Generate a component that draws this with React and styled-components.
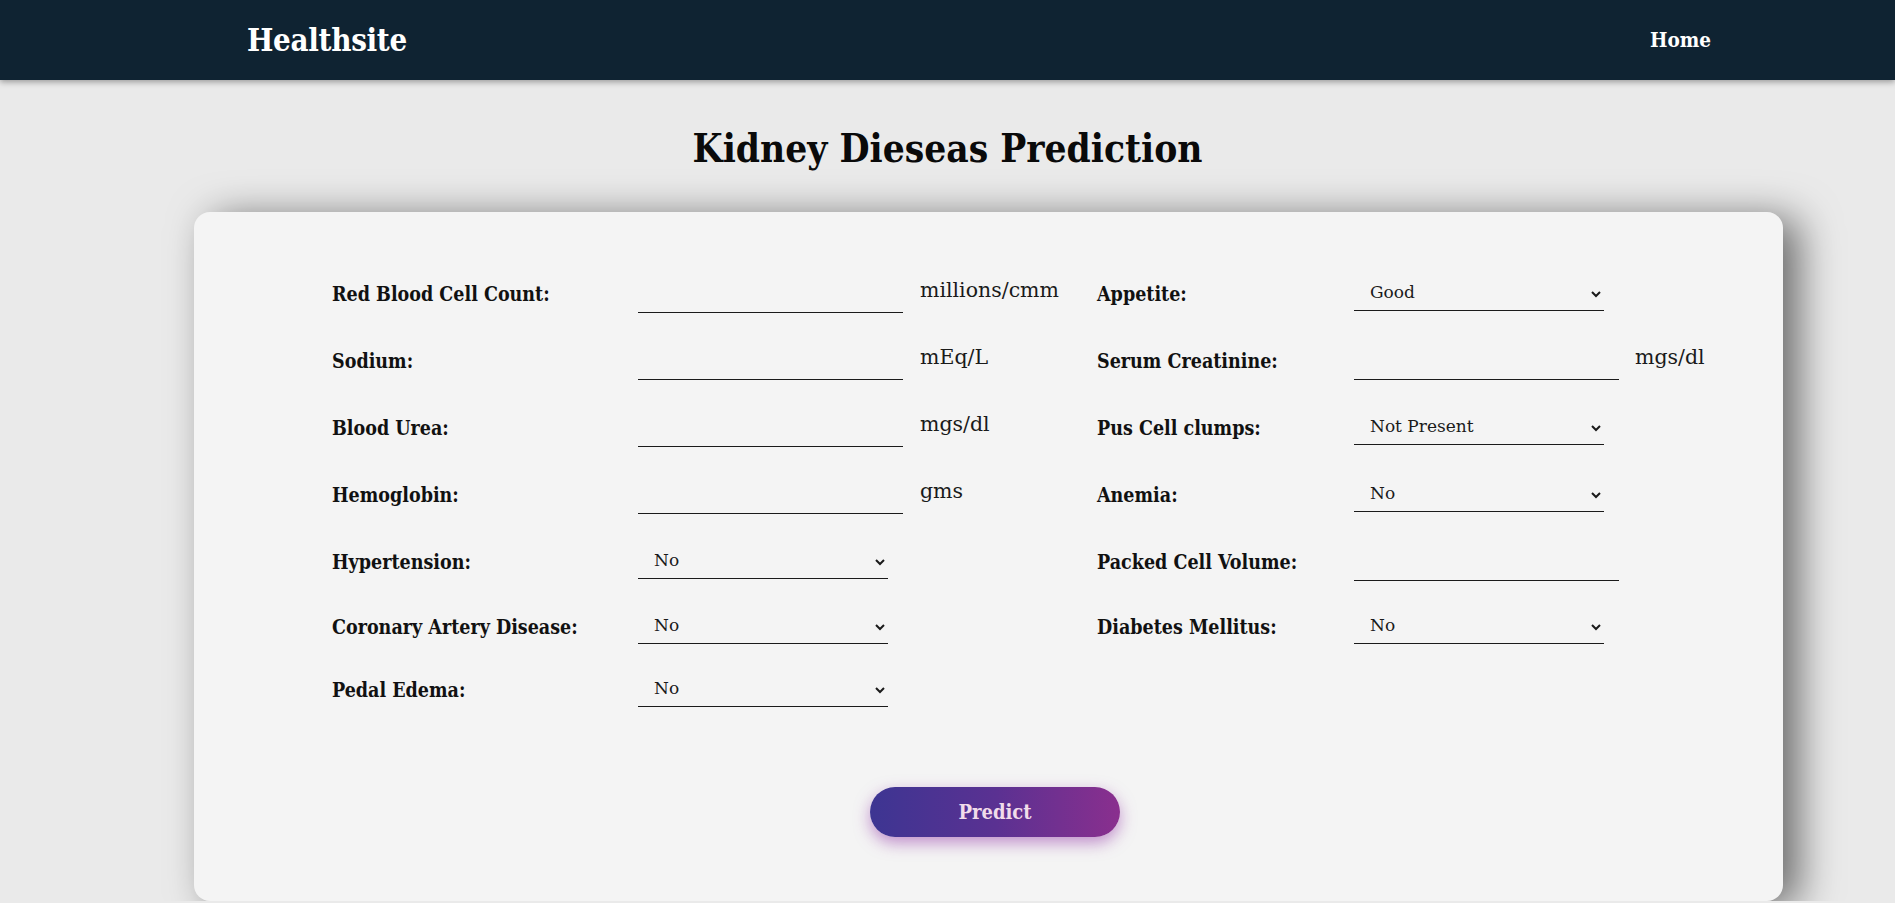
import styled, { createGlobalStyle } from "styled-components";

const GlobalStyle = createGlobalStyle`
  body {
    margin: 0;
    background: #eaeaea;
    font-family: "DejaVu Serif", serif;
    font-stretch: condensed;
    color: #111;
  }
`;

const leftRows = [
  { label: "Red Blood Cell Count:", type: "input", unit: "millions/cmm" },
  { label: "Sodium:", type: "input", unit: "mEq/L" },
  { label: "Blood Urea:", type: "input", unit: "mgs/dl" },
  { label: "Hemoglobin:", type: "input", unit: "gms" },
  { label: "Hypertension:", type: "select", options: ["No", "Yes"] },
  { label: "Coronary Artery Disease:", type: "select", options: ["No", "Yes"] },
  { label: "Pedal Edema:", type: "select", options: ["No", "Yes"] },
];

const rightRows = [
  { label: "Appetite:", type: "select", options: ["Good", "Poor"] },
  { label: "Serum Creatinine:", type: "input", unit: "mgs/dl" },
  { label: "Pus Cell clumps:", type: "select", options: ["Not Present", "Present"] },
  { label: "Anemia:", type: "select", options: ["No", "Yes"] },
  { label: "Packed Cell Volume:", type: "input" },
  { label: "Diabetes Mellitus:", type: "select", options: ["No", "Yes"] },
  null,
];

const renderField = (field, prefix) => {
  if (!field) {
    return [<span key={`${prefix}a`} />, <span key={`${prefix}b`} />, <span key={`${prefix}c`} />];
  }

  return [
    <Label key={`${prefix}label`}>{field.label}</Label>,
    <FieldCell key={`${prefix}field`}>
      {field.type === "input" ? (
        <TextInput type="text" />
      ) : (
        <Select defaultValue={field.options[0]}>
          {field.options.map((opt) => (
            <option key={opt}>{opt}</option>
          ))}
        </Select>
      )}
    </FieldCell>,
    <Unit key={`${prefix}unit`}>{field.unit || ""}</Unit>,
  ];
};

const App = () => {
  return (
    <>
      <GlobalStyle />
      <Navbar>
        <Brand>Healthsite</Brand>
        <NavLink href="#">Home</NavLink>
      </Navbar>

      <TitleArea>
        <Title>Kidney Dieseas Prediction</Title>
      </TitleArea>

      <Card>
        <FormGrid>
          {leftRows.map((row, i) => [
            ...renderField(row, `l${i}`),
            ...renderField(rightRows[i], `r${i}`),
          ])}
        </FormGrid>

        <ButtonRow>
          <PredictButton type="button">Predict</PredictButton>
        </ButtonRow>
      </Card>
    </>
  );
};

const Navbar = styled.nav`
  height: 80px;
  background: #0f2332;
  display: flex;
  align-items: center;
  justify-content: space-between;
  padding: 0 184px 0 247px;
  box-shadow: 0 2px 6px rgba(0, 0, 0, 0.35);
  position: relative;
`;

const Brand = styled.div`
  color: #fff;
  font-weight: 700;
  font-size: 31px;
  letter-spacing: -0.3px;
`;

const NavLink = styled.a`
  color: #fff;
  font-weight: 700;
  font-size: 20.5px;
  text-decoration: none;
`;

const TitleArea = styled.div`
  height: 132px;
  display: flex;
  align-items: center;
  justify-content: center;
  padding-top: 4px;
  box-sizing: border-box;
`;

const Title = styled.h1`
  margin: 0;
  font-size: 38.5px;
  font-weight: 700;
  color: #0a0a0a;
`;

const Card = styled.div`
  margin: 0 112px 0 194px;
  background: #f4f4f4;
  border-radius: 16px;
  box-shadow: 16px 6px 40px rgba(0, 0, 0, 0.55);
  padding: 64px 0 64px 138px;
`;

const FormGrid = styled.div`
  display: grid;
  grid-template-columns: 306px 282px 177px 257px 281px auto;
  align-items: center;
  row-gap: 30px;
`;

const Label = styled.label`
  font-weight: 700;
  font-size: 19.5px;
  color: #111;
`;

const FieldCell = styled.div`
  display: flex;
`;

const TextInput = styled.input`
  width: 265px;
  height: 37px;
  box-sizing: border-box;
  border: none;
  border-bottom: 1px solid #1a1a1a;
  background: transparent;
  outline: none;
  font-family: inherit;
  font-size: 18px;
`;

const Select = styled.select`
  width: 250px;
  height: 33px;
  box-sizing: border-box;
  border: none;
  border-bottom: 1px solid #1a1a1a;
  border-radius: 0;
  background: transparent;
  padding: 0 0 5px 12px;
  font-family: "DejaVu Serif", serif;
  font-stretch: normal;
  font-size: 17px;
  color: #1a1a1a;
  outline: none;
`;

const Unit = styled.span`
  font-size: 20.5px;
  font-stretch: normal;
  color: #1a1a1a;
  align-self: start;
  padding-top: 2px;
`;

const ButtonRow = styled.div`
  display: flex;
  justify-content: center;
  padding-right: 125px;
  margin-top: 80px;
`;

const PredictButton = styled.button`
  width: 250px;
  height: 50px;
  border: none;
  border-radius: 25px;
  background: linear-gradient(90deg, #3d3592 0%, #5a3192 50%, #8a2f8e 100%);
  color: #f1dcea;
  font-family: inherit;
  font-stretch: condensed;
  font-weight: 700;
  font-size: 20px;
  box-shadow: 0 6px 16px rgba(150, 60, 170, 0.55);
  cursor: pointer;
`;

export default App;
